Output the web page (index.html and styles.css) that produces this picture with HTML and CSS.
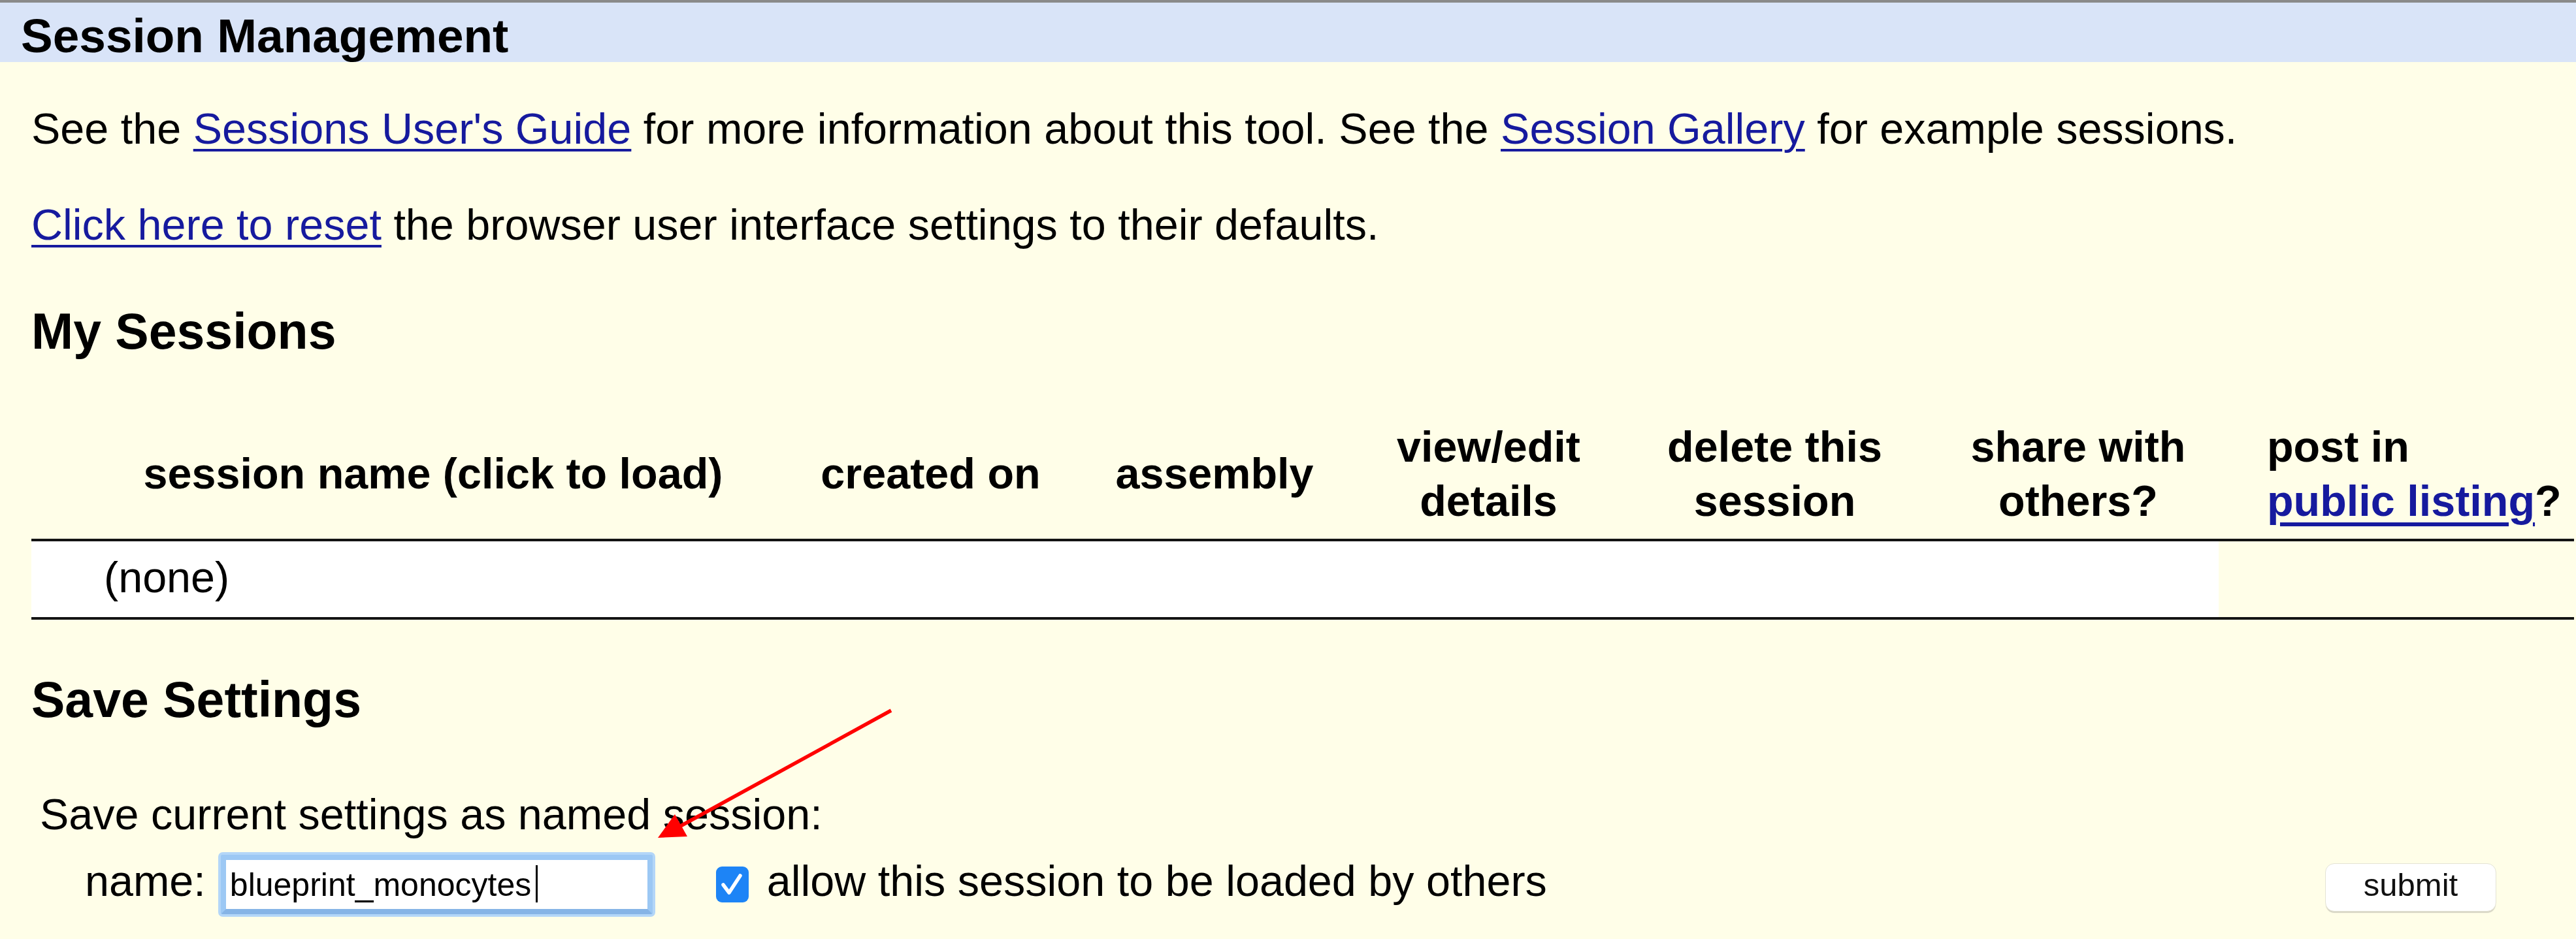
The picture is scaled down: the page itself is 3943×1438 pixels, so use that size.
FILE: index.html
```html
<!DOCTYPE html>
<html lang="en">
<head>
<meta charset="utf-8">
<title>Session Management</title>
<link rel="stylesheet" href="styles.css">
</head>
<body>
<div class="topbar"></div>
<div class="titlebar">Session Management</div>
<div class="content">
  <p class="intro">See the <a href="#">Sessions User's Guide</a> for more information about this tool. See the <a href="#">Session Gallery</a> for example sessions.</p>
  <p class="reset"><a href="#">Click here to reset</a> the browser user interface settings to their defaults.</p>

  <h3 class="section-title my-sessions">My Sessions</h3>
  <table class="sessions">
    <colgroup>
      <col class="c-spacer">
      <col class="c-name">
      <col class="c-created">
      <col class="c-assembly">
      <col class="c-details">
      <col class="c-delete">
      <col class="c-share">
      <col class="c-public">
    </colgroup>
    <thead>
      <tr>
        <th class="spacer"></th>
        <th>session name (click to load)</th>
        <th>created on</th>
        <th>assembly</th>
        <th>view/edit<br>details</th>
        <th>delete this<br>session</th>
        <th>share with<br>others?</th>
        <th class="public">post in<br><a href="#">public listing</a>?</th>
      </tr>
    </thead>
    <tbody>
      <tr>
        <td colspan="7" class="none">(none)</td>
        <td class="rest"></td>
      </tr>
    </tbody>
  </table>

  <h3 class="section-title save-title">Save Settings</h3>
  <form class="save-form">
    <div class="save-label">Save current settings as named session:</div>
    <div class="name-row">
      <label class="name-label" for="sessionName">name:</label>
      <span class="input-wrap"><input id="sessionName" class="name-input" type="text" value="blueprint_monocytes"></span>
      <span class="checkbox" role="checkbox" aria-checked="true">
        <svg viewBox="0 0 50 55" width="50" height="55" aria-hidden="true">
          <rect x="0" y="0" width="50" height="55" rx="9" ry="9" fill="#1d84f6"/>
          <path d="M11 28 L20 40 L37 14" fill="none" stroke="#ffffff" stroke-width="5.5" stroke-linecap="round" stroke-linejoin="round"/>
        </svg>
      </span>
      <span class="share-label">allow this session to be loaded by others</span>
      <button class="submit" type="button">submit</button>
    </div>
  </form>
</div>

<svg class="arrow" viewBox="0 0 400 230" width="400" height="230" aria-hidden="true">
  <line x1="374" y1="18" x2="48" y2="197" stroke="#ff0000" stroke-width="5.5"/>
  <polygon points="17,213 62,211 43,177" fill="#ff0000"/>
</svg>
</body>
</html>
```

FILE: styles.css
```css
html, body {
  margin: 0;
  padding: 0;
}

body {
  position: relative;
  width: 3943px;
  min-height: 1438px;
  background: #fffee8;
  color: #000;
  font-family: "Liberation Sans", Arial, sans-serif;
  font-size: 66.5px;
  line-height: 76px;
  overflow: hidden;
}

.topbar {
  height: 4px;
  background: #8a8a8a;
}

.titlebar {
  box-sizing: border-box;
  height: 91px;
  padding: 11px 0 0 32px;
  background: #d9e4f8;
  font-weight: bold;
  font-size: 73px;
  line-height: 80px;
}

.content {
  padding-left: 48px;
}

a {
  color: #161a9e;
  text-decoration: underline;
  text-underline-offset: 8px;
  text-decoration-thickness: 4px;
}

.intro {
  margin: 64px 0 0;
}

.reset {
  margin: 71px 0 0;
}

.section-title {
  margin: 0;
  font-size: 77px;
  font-weight: bold;
  line-height: 88px;
}

.my-sessions {
  margin-top: 81px;
}

.save-title {
  margin-top: 78px;
}

/* sessions table */
.sessions {
  margin-top: 81.5px;
  width: 3892px;
  table-layout: fixed;
  border-collapse: separate;
  border-spacing: 0;
}

.c-spacer { width: 57px; }
.c-name { width: 1116px; }
.c-created { width: 407px; }
.c-assembly { width: 462px; }
.c-details { width: 377px; }
.c-delete { width: 499px; }
.c-share { width: 430px; }
.c-public { width: 544px; }

.sessions th {
  padding: 10px 0 16.5px;
  font-weight: bold;
  font-size: 66.5px;
  line-height: 83px;
  text-align: center;
  vertical-align: middle;
  white-space: nowrap;
  border-bottom: 4px solid #141414;
}

.sessions th.public {
  text-align: left;
  padding-left: 74px;
}

.sessions th a {
  text-underline-offset: 10px;
  text-decoration-thickness: 6px;
}

.sessions td {
  padding: 14px 0 19px;
  line-height: 83px;
  border-bottom: 4px solid #141414;
}

.sessions td.none {
  background: #ffffff;
  padding-left: 111px;
}

/* save form */
.save-form {
  margin: 0;
  padding-left: 13px;
}

.save-label {
  margin-top: 94px;
}

.name-row {
  display: flex;
  align-items: baseline;
  margin-top: 24px;
  padding-left: 69px;
  padding-right: 122px;
}

.input-wrap {
  position: relative;
  display: flex;
  margin-left: 23px;
}

.input-wrap::after {
  content: "";
  position: absolute;
  left: 482px;
  top: 16px;
  width: 3px;
  height: 57px;
  background: #000;
}

.name-input {
  box-sizing: border-box;
  width: 661px;
  height: 91px;
  margin: 0;
  padding: 0 0 0 6px;
  border: 8px solid #9cc8f4;
  border-bottom-color: #86b4e6;
  border-radius: 3px;
  box-shadow: 0 0 0 4px #b3d6f8;
  outline: none;
  background: #ffffff;
  color: #000;
  font-family: "Liberation Sans", Arial, sans-serif;
  font-size: 50px;
}

.checkbox {
  align-self: center;
  display: flex;
  width: 50px;
  height: 55px;
  margin-left: 97px;
}

.share-label {
  margin-left: 28px;
}

.submit {
  box-sizing: border-box;
  margin-left: auto;
  width: 262px;
  height: 74px;
  padding: 0 0 8px;
  border: 1px solid #e4e3d4;
  border-radius: 14px;
  background: #ffffff;
  box-shadow: 0 3px 1px -1px #d6d4c4;
  color: #111;
  font-family: "Liberation Sans", Arial, sans-serif;
  font-size: 49px;
}

.arrow {
  position: absolute;
  left: 990px;
  top: 1070px;
  pointer-events: none;
}
```
